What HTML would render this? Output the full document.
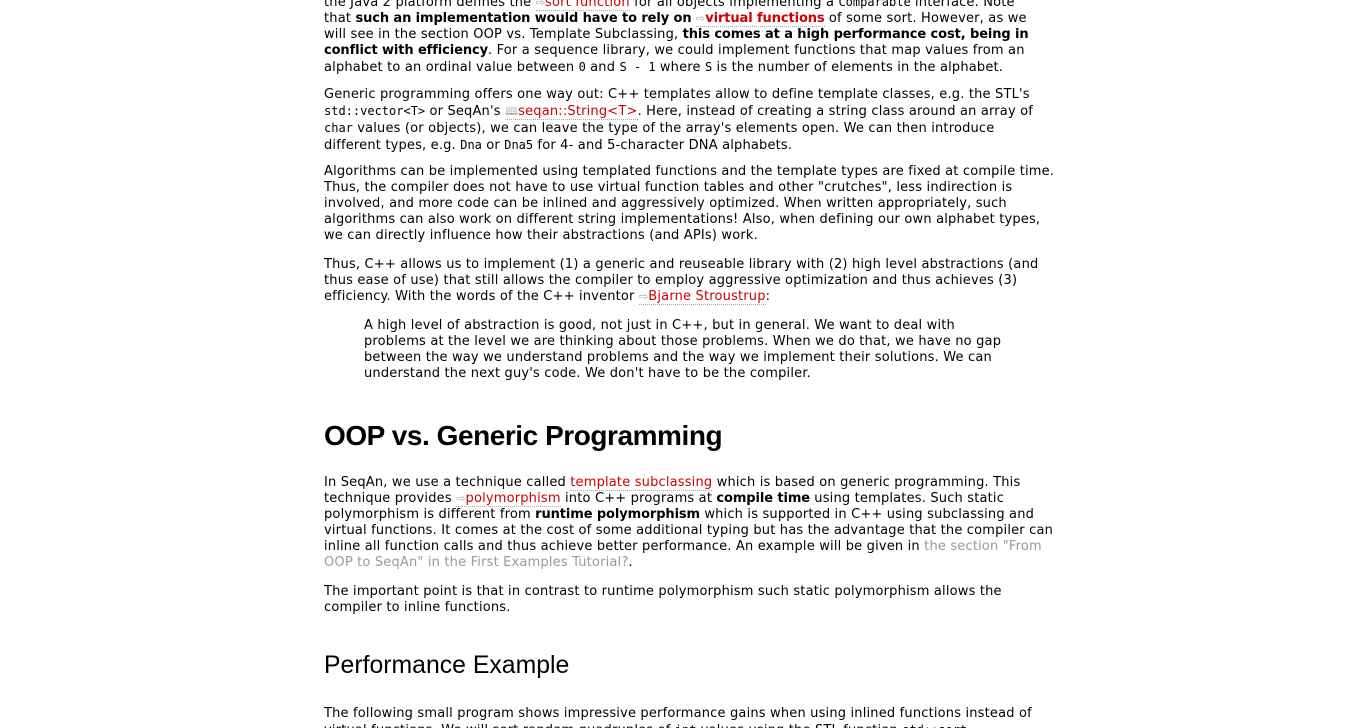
<!DOCTYPE html>
<html><head><meta charset="utf-8"><style>
html,body{margin:0;padding:0;background:#fff;width:1366px;height:728px;overflow:hidden;position:relative}
.p{position:absolute;left:324px;font-family:"DejaVu Sans","Liberation Sans",sans-serif;font-size:13px;line-height:16px;color:#000;white-space:nowrap;letter-spacing:0.18px;margin-top:1px}
.p b{font-weight:bold;letter-spacing:-0.1px}
a{color:#c00;text-decoration:none;border-bottom:1px dotted #aaa}
.ar{color:#aaa;font-size:11px}
code{font-family:"DejaVu Sans Mono","Liberation Mono",monospace;font-size:12px;letter-spacing:0}
.g{color:#999;border:none}
h1{position:absolute;left:324px;top:418px;margin:0;font-family:"Liberation Sans",sans-serif;font-size:28px;font-weight:bold;line-height:36px;letter-spacing:-0.45px}
h2{position:absolute;left:324px;top:651px;margin:0;font-family:"Liberation Sans",sans-serif;font-size:24.8px;font-weight:normal;line-height:30px}
</style></head><body>
<div class="p" style="top:-7px">the Java 2 platform defines the <a><span class="ar">⇨</span>sort function</a> for all objects implementing a <code>Comparable</code> interface. Note<br>that <b>such an implementation would have to rely on</b> <a><span class="ar">⇨</span><b>virtual functions</b></a> of some sort. However, as we<br>will see in the section OOP vs. Template Subclassing, <b>this comes at a high performance cost, being in<br>conflict with efficiency</b>. For a sequence library, we could implement functions that map values from an<br>alphabet to an ordinal value between <code>0</code> and <code>S - 1</code> where <code>S</code> is the number of elements in the alphabet.</div>
<div class="p" style="top:86px">Generic programming offers one way out: C++ templates allow to define template classes, e.g. the STL's<br><code>std::vector&lt;T&gt;</code> or SeqAn's <a><span class="ar">🕮</span>seqan::String&lt;T&gt;</a>. Here, instead of creating a string class around an array of<br><code>char</code> values (or objects), we can leave the type of the array's elements open. We can then introduce<br>different types, e.g. <code>Dna</code> or <code>Dna5</code> for 4- and 5-character DNA alphabets.</div>
<div class="p" style="top:163px">Algorithms can be implemented using templated functions and the template types are fixed at compile time.<br>Thus, the compiler does not have to use virtual function tables and other "crutches", less indirection is<br>involved, and more code can be inlined and aggressively optimized. When written appropriately, such<br>algorithms can also work on different string implementations! Also, when defining our own alphabet types,<br>we can directly influence how their abstractions (and APIs) work.</div>
<div class="p" style="top:256px">Thus, C++ allows us to implement (1) a generic and reuseable library with (2) high level abstractions (and<br>thus ease of use) that still allows the compiler to employ aggressive optimization and thus achieves (3)<br>efficiency. With the words of the C++ inventor <a><span class="ar">⇨</span>Bjarne Stroustrup</a>:</div>
<div class="p" style="top:317px;left:364px">A high level of abstraction is good, not just in C++, but in general. We want to deal with<br>problems at the level we are thinking about those problems. When we do that, we have no gap<br>between the way we understand problems and the way we implement their solutions. We can<br>understand the next guy's code. We don't have to be the compiler.</div>
<h1>OOP vs. Generic Programming</h1>
<div class="p" style="top:474px">In SeqAn, we use a technique called <a>template subclassing</a> which is based on generic programming. This<br>technique provides <a><span class="ar">⇨</span>polymorphism</a> into C++ programs at <b>compile time</b> using templates. Such static<br>polymorphism is different from <b>runtime polymorphism</b> which is supported in C++ using subclassing and<br>virtual functions. It comes at the cost of some additional typing but has the advantage that the compiler can<br>inline all function calls and thus achieve better performance. An example will be given in <a class="g">the section "From<br>OOP to SeqAn" in the First Examples Tutorial?</a>.</div>
<div class="p" style="top:583px">The important point is that in contrast to runtime polymorphism such static polymorphism allows the<br>compiler to inline functions.</div>
<h2>Performance Example</h2>
<div class="p" style="top:705px">The following small program shows impressive performance gains when using inlined functions instead of<br>virtual functions. We will sort random quadruples of <code>int</code> values using the STL function <code>std::sort</code>.</div>
</body></html>
